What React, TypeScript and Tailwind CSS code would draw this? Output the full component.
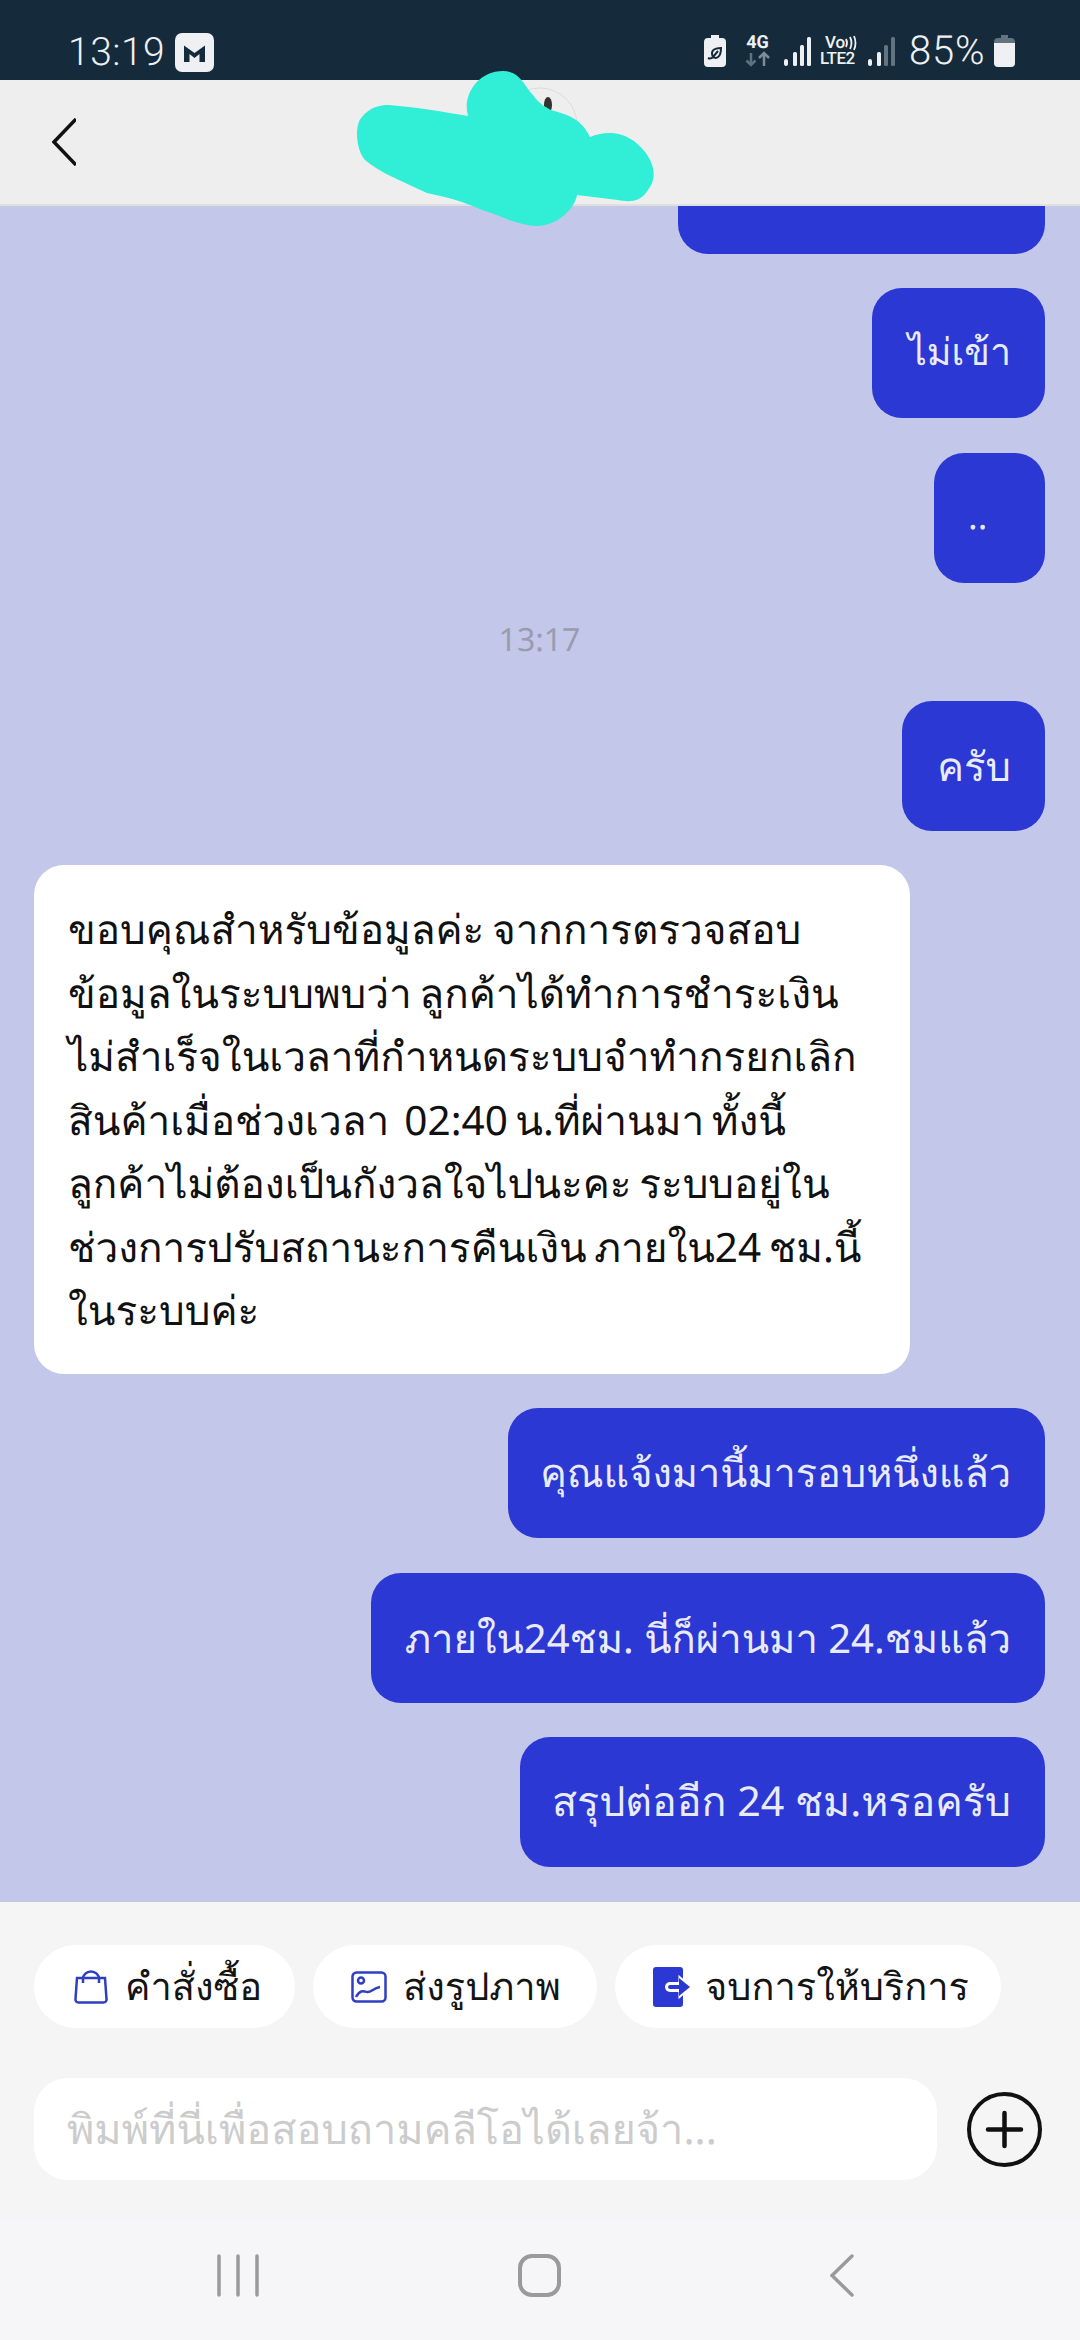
const font = { fontFamily: '"Noto Sans", "Inter", "DejaVu Sans", sans-serif' };

interface BubbleProps {
  text: string;
  className: string;
}

const Outgoing = ({ text, className }: BubbleProps) => (
  <div className={`h-[130px] self-end shrink-0 rounded-[30px] bg-[#2b38d3] pr-[34px] flex items-center justify-end text-[#e9ebfb] whitespace-nowrap ${className}`}>
    {text}
  </div>
);

const Signal = ({ weak }: { weak: boolean }) => (
  <svg width="27" height="29" viewBox="0 0 27 29">
    <rect x="0" y="22" width="4" height="7" rx="2" fill="#eef0f3" />
    <rect x="9" y="15" width="4" height="14" rx="1.500" fill="#eef0f3" />
    <rect x="16" y="8" width="4" height="21" rx="1.500" fill={weak ? "#63747f" : "#eef0f3"} />
    <rect x="23" y="0" width="4" height="29" rx="1.500" fill={weak ? "#63747f" : "#eef0f3"} />
  </svg>
);

const StatusBar = () => (
  <div className="h-20 shrink-0 bg-[#152b3b] flex items-start justify-between pl-[68px] pr-[65px] pt-[32px] text-[#eef0f3]">
    <div className="flex items-center">
      <span className="w-[107px] text-[39px] leading-[40px] font-light tracking-[0.5px]" style={{ fontFamily: "Roboto, sans-serif" }}>13:19</span>
      <svg width="39" height="39" viewBox="0 0 39 39">
        <rect width="39" height="39" rx="7" fill="#eef0f3" />
        <path d="M9 12.500 19.500 20 30 12.500V29h-5.500V21L19.500 25 14.500 21v8H9z" fill="#152b3b" />
      </svg>
    </div>
    <div className="flex items-center h-[38px]">
      <svg width="22" height="32" viewBox="0 0 22 32">
        <path d="M7 0h8v3h3a4 4 0 0 1 4 4v21a4 4 0 0 1-4 4H4a4 4 0 0 1-4-4V7a4 4 0 0 1 4-4h3z" fill="#eef0f3" />
        <path d="M4 23c2 1 4 0 5-1 3 2 8 1 8-9-7 0-11 3-8 9M9 22l5-6" fill="none" stroke="#152b3b" strokeWidth="2" />
      </svg>
      <div className="ml-[19px] w-[25px] h-[32px] flex flex-col items-center">
        <span className="text-[18px] leading-[16px] font-bold whitespace-nowrap" style={{ fontFamily: "Roboto, sans-serif" }}>4G</span>
        <svg width="25" height="16" viewBox="0 0 25 16">
          <path d="M6 2v12M1.500 9.500 6 14l4.500-4.500" fill="none" stroke="#5f7280" strokeWidth="2.500" />
          <path d="M19 15V2M14 7l5-5 5 5" fill="none" stroke="#7d8c97" strokeWidth="2.500" />
        </svg>
      </div>
      <div className="ml-[14px]"><Signal weak={false} /></div>
      <div className="relative ml-[9px] w-[39px] h-[32px] flex flex-col text-[17px] leading-[16px] font-medium whitespace-nowrap" style={{ fontFamily: "Roboto, sans-serif" }}>
        <span className="pl-[5px]">Vo</span>
        <span className="tracking-[-0.5px]">LTE2</span>
        <svg className="absolute left-[24px] top-0" width="14" height="16" viewBox="0 0 14 16">
          <path d="M2 4q2 4 0 8M6 2q3 6 0 12M10 1q3 7 0 14" fill="none" stroke="#eef0f3" strokeWidth="1.800" />
        </svg>
      </div>
      <div className="ml-[9px]"><Signal weak={true} /></div>
      <span className="ml-[14px] w-[78px] text-[40px] leading-[38px] font-light tracking-[0.8px] whitespace-nowrap" style={{ fontFamily: "Roboto, sans-serif" }}>85%</span>
      <svg className="ml-[7px]" width="21" height="32" viewBox="0 0 21 32">
        <path d="M7 0h7v3h3a4 4 0 0 1 4 4v3H0V7a4 4 0 0 1 4-4h3z" fill="#63747f" />
        <path d="M0 8h21v20a4 4 0 0 1-4 4H4a4 4 0 0 1-4-4z" fill="#eef0f3" />
      </svg>
    </div>
  </div>
);

const Header = () => (
  <div className="h-[126px] shrink-0 bg-[#eeeeee] border-b-2 border-[#e0e0dc] flex items-center pl-[52px]">
    <svg width="24" height="48" viewBox="0 0 24 48">
      <path d="M24 1 2 24l22 23" fill="none" stroke="#111111" strokeWidth="3.500" />
    </svg>
  </div>
);

const Chat = () => (
  <div className="flex-1 min-h-0 overflow-hidden bg-[#c3c7ea] flex flex-col justify-end gap-[34.500px] pl-[34px] pr-[35px] pb-[35px]">
    <div className="h-[130px] w-[367px] self-end shrink-0 rounded-[30px] bg-[#2b38d3]" />
    <Outgoing text="ไม่เข้า" className="w-[173px] text-[37.500px] pb-[4px]" />
    <div className="h-[130px] w-[111px] self-end shrink-0 rounded-[30px] bg-[#2b38d3] pl-[34px] pb-[4px] flex items-center text-[36px] text-[#e9ebfb]">
      ..
    </div>
    <div className="h-[46px] mb-[3px] shrink-0 text-center text-[32px] leading-[46px] text-[#9a9cae]">13:17</div>
    <Outgoing text="ครับ" className="w-[143px] text-[40px]" />
    <div className="w-[876px] shrink-0 rounded-[30px] bg-white px-[34px] py-[32px] text-[40.500px] leading-[63.500px] text-[#111111] whitespace-nowrap [word-spacing:-3px]">
      <p>ขอบคุณสำหรับข้อมูลค่ะ จากการตรวจสอบ</p>
      <p>ข้อมูลในระบบพบว่า ลูกค้าได้ทำการชำระเงิน</p>
      <p>ไม่สำเร็จในเวลาที่กำหนดระบบจำทำกรยกเลิก</p>
      <p className="whitespace-pre">สินค้าเมื่อช่วงเวลา  02:40 น.ที่ผ่านมา ทั้งนี้</p>
      <p>ลูกค้าไม่ต้องเป็นกังวลใจไปนะคะ ระบบอยู่ใน</p>
      <p>ช่วงการปรับสถานะการคืนเงิน ภายใน24 ชม.นี้</p>
      <p>ในระบบค่ะ</p>
    </div>
    <Outgoing text="คุณแจ้งมานี้มารอบหนึ่งแล้ว" className="w-[537px] text-[39.700px]" />
    <Outgoing text="ภายใน24ชม. นี่ก็ผ่านมา 24.ชมแล้ว" className="w-[674px] text-[40px]" />
    <Outgoing text="สรุปต่ออีก 24 ชม.หรอครับ" className="w-[525px] text-[41.200px]" />
  </div>
);

const BagIcon = () => (
  <svg width="34" height="34" viewBox="0 0 34 34" fill="none" stroke="#2f3fc4" strokeWidth="2.500">
    <path d="M3 8h28l1.500 21a3 3 0 0 1-3 3.500H4.500a3 3 0 0 1-3-3.500z" />
    <path d="M9 13V9a8 7.500 0 0 1 16 0v4" />
  </svg>
);

const ImageIcon = () => (
  <svg width="36" height="32" viewBox="0 0 36 32" fill="none" stroke="#2f3fc4" strokeWidth="2.500">
    <rect x="1.500" y="1.500" width="33" height="29" rx="4" />
    <circle cx="10" cy="9.500" r="3" />
    <path d="M5 26c4-7 7-6 11-5s6-4 13-5" />
  </svg>
);

const ExitIcon = () => (
  <svg width="38" height="40" viewBox="0 0 38 40">
    <rect x="0" y="0" width="30" height="40" rx="3" fill="#2b38d3" />
    <path d="M17 20h11" stroke="white" strokeWidth="10" strokeLinecap="round" />
    <path d="M27 11 37 20 27 29z" fill="white" stroke="white" strokeWidth="3" />
    <path d="M17 20h11" stroke="#2b38d3" strokeWidth="4" strokeLinecap="round" />
    <path d="M26 11 37 20 26 29z" fill="#2b38d3" />
  </svg>
);

const Composer = () => (
  <div className="h-[318px] shrink-0 bg-[#f5f5f5] px-[34px] pt-[43px]">
    <div className="flex gap-[18px] text-[38px] text-[#141414] whitespace-nowrap">
      <div className="h-[83px] w-[261px] rounded-full bg-white flex items-center pl-[40px] gap-[17px]">
        <BagIcon />
        <span>คำสั่งซื้อ</span>
      </div>
      <div className="h-[83px] w-[284px] rounded-full bg-white flex items-center pl-[38px] gap-[16px]">
        <ImageIcon />
        <span>ส่งรูปภาพ</span>
      </div>
      <div className="h-[83px] w-[386px] rounded-full bg-white flex items-center pl-[38px] gap-[14px]">
        <ExitIcon />
        <span>จบการให้บริการ</span>
      </div>
    </div>
    <div className="mt-[50px] flex items-center">
      <div className="h-[102px] w-[903px] rounded-[34px] bg-white pl-[33px] flex items-center text-[41.500px] text-[#cccccc] whitespace-nowrap">
        พิมพ์ที่นี่เพื่อสอบถามคลีโอได้เลยจ้า...
      </div>
      <svg className="ml-[30px]" width="75" height="75" viewBox="0 0 75 75" fill="none" stroke="#111111">
        <circle cx="37.500" cy="37.500" r="35.500" strokeWidth="4" />
        <path d="M21 37.500h33M37.500 21v33" strokeWidth="4.500" strokeLinecap="round" />
      </svg>
    </div>
  </div>
);

const NavBar = () => (
  <div className="h-[120px] shrink-0 bg-[#f6f6f8] flex items-start pt-[34px] pl-[217px]">
    <svg width="42" height="43" viewBox="0 0 42 43" stroke="#9a9a9a" strokeWidth="3.500" strokeLinecap="round">
      <path d="M2 2v39M21 2v39M40 2v39" />
    </svg>
    <svg className="ml-[259px]" width="43" height="43" viewBox="0 0 43 43" fill="none" stroke="#9a9a9a" strokeWidth="4">
      <rect x="2" y="2" width="39" height="39" rx="12" />
    </svg>
    <svg className="ml-[269px]" width="24" height="43" viewBox="0 0 24 43" fill="none" stroke="#9a9a9a" strokeWidth="3.500" strokeLinecap="round">
      <path d="M22 2 2 21.500 22 41" />
    </svg>
  </div>
);

export default function App() {
  return (
    <div className="relative w-[1080px] h-[2340px] overflow-hidden flex flex-col [text-rendering:geometricPrecision]" style={font}>
      <StatusBar />
      <Header />
      <Chat />
      <Composer />
      <NavBar />
      {/* scribble over the shop name */}
      <svg className="absolute left-[350px] top-[65px]" width="310" height="170" viewBox="0 0 310 170">
        <circle cx="190" cy="60" r="37" fill="none" stroke="#dcdcdc" strokeWidth="1" />
        <ellipse cx="198" cy="40" rx="4" ry="8" fill="#333333" />
        <path
          d="M39 40C65 42 95 47 118 51C112 30 128 6 153 6C170 6 175 22 183 30C190 40 196 42 201 45C220 50 232 55 240 72C255 66 270 66 284 76C302 90 310 110 298 125C290 138 278 137 268 135L227 130C224 146 205 161 187 161C165 160 150 150 132 145C110 135 95 132 77 128C50 115 30 108 15 95C6 85 4 60 12 52C20 42 30 40 39 40Z"
          fill="#30efd6"
        />
      </svg>
    </div>
  );
}
